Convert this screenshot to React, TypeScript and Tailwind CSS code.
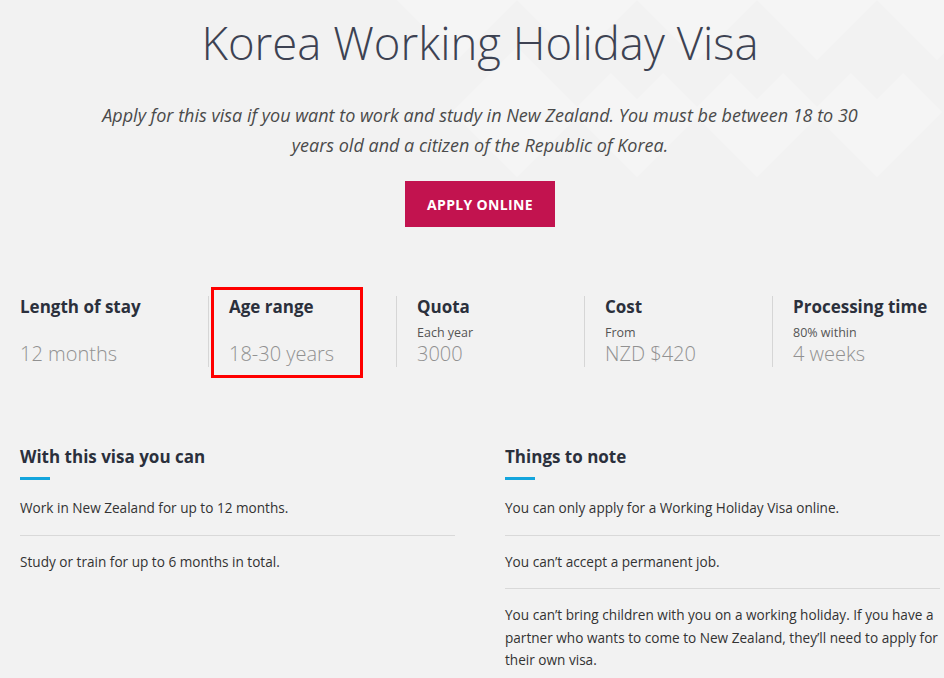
const stats = [
  { label: "Length of stay", sub: "", value: "12 months" },
  { label: "Age range", sub: "", value: "18-30 years", marked: true },
  { label: "Quota", sub: "Each year", value: "3000" },
  { label: "Cost", sub: "From", value: "NZD $420" },
  { label: "Processing time", sub: "80% within", value: "4 weeks" },
];

const canDo = [
  "Work in New Zealand for up to 12 months.",
  "Study or train for up to 6 months in total.",
];

const notes = [
  "You can only apply for a Working Holiday Visa online.",
  "You can\u2019t accept a permanent job.",
  "You can\u2019t bring children with you on a working holiday. If you have a partner who wants to come to New Zealand, they\u2019ll need to apply for their own visa.",
];

const diamond = (cx: number, cy: number, r: number) =>
  `${cx},${cy - r} ${cx + r},${cy} ${cx},${cy + r} ${cx - r},${cy}`;

const Backdrop = () => (
  <svg
    className="absolute left-0 top-0 pointer-events-none"
    width="944"
    height="240"
    viewBox="0 0 944 240"
  >
    {[457, 577, 697, 817, 937].map((x) => (
      <polygon key={"t" + x} points={diamond(x, 0, 60)} fill="#f5f5f5" />
    ))}
    {[517, 637, 757, 877].map((x) => (
      <polygon key={"m" + x} points={diamond(x, 112, 65)} fill="#f5f5f5" />
    ))}
    {[637, 757, 877].map((x) => (
      <polygon key={"d" + x} points={diamond(x, 67, 32)} fill="#f2f2f2" />
    ))}
  </svg>
);

const Stat = (props: { label: string; sub: string; value: string; marked?: boolean; first: boolean }) => (
  <div
    className={
      "relative h-[71px] " + (props.first ? "" : "border-l border-[#d6d6d6] pl-5")
    }
  >
    <p className="text-[17px] leading-[22px] font-bold text-[#2b303c]">{props.label}</p>
    <p className="mt-[6px] h-[18px] text-[12.5px] leading-[18px] text-[#555]">{props.sub}</p>
    <p className="text-[20px] leading-[24px] font-light text-[#919191]">{props.value}</p>
    {props.marked && (
      <div className="absolute left-[2px] top-[-9px] w-[152px] h-[91px] border-[3px] border-[#ff0000]" />
    )}
  </div>
);

const ListBlock = (props: { title: string; items: string[] }) => (
  <div className="w-[435px]">
    <h2 className="text-[17px] leading-[24px] font-bold text-[#2b303c]">{props.title}</h2>
    <div className="mt-2 w-[30px] h-[3px] bg-[#14a5dd]" />
    <ul className="mt-[2px]">
      {props.items.map((t, i) => (
        <li
          key={i}
          className="py-[15px] text-[13.6px] leading-[22.5px] text-[#333] border-b border-[#d9d9d9] last:border-b-0"
        >
          {t}
        </li>
      ))}
    </ul>
  </div>
);

export default function App() {
  return (
    <div className="relative w-[944px] h-[678px] overflow-hidden bg-[#f2f2f2] font-['Open_Sans',Arial,sans-serif]">
      <Backdrop />
      <div className="relative w-[960px] flex flex-col items-center">
        <h1 className="mt-[13px] text-[45.5px] leading-[58px] font-light text-[#3d4252]">
          Korea Working Holiday Visa
        </h1>
        <p className="mt-[29px] w-[780px] text-center italic text-[18px] leading-[30px] text-[#4a4a4a]">
          Apply for this visa if you want to work and study in New Zealand. You must be between 18 to 30 years old and a citizen of the Republic of Korea.
        </p>
        <button className="mt-[21px] w-[150px] h-[46px] bg-[#c2134f] text-white text-[14px] font-bold tracking-wide">
          APPLY ONLINE
        </button>
      </div>

      <div className="relative mt-[69px] ml-5 grid grid-cols-[repeat(5,188px)]">
        {stats.map((s, i) => (
          <Stat key={s.label} {...s} first={i === 0} />
        ))}
      </div>

      <div className="mt-[78px] ml-5 flex gap-[50px]">
        <ListBlock title="With this visa you can" items={canDo} />
        <ListBlock title="Things to note" items={notes} />
      </div>
    </div>
  );
}
